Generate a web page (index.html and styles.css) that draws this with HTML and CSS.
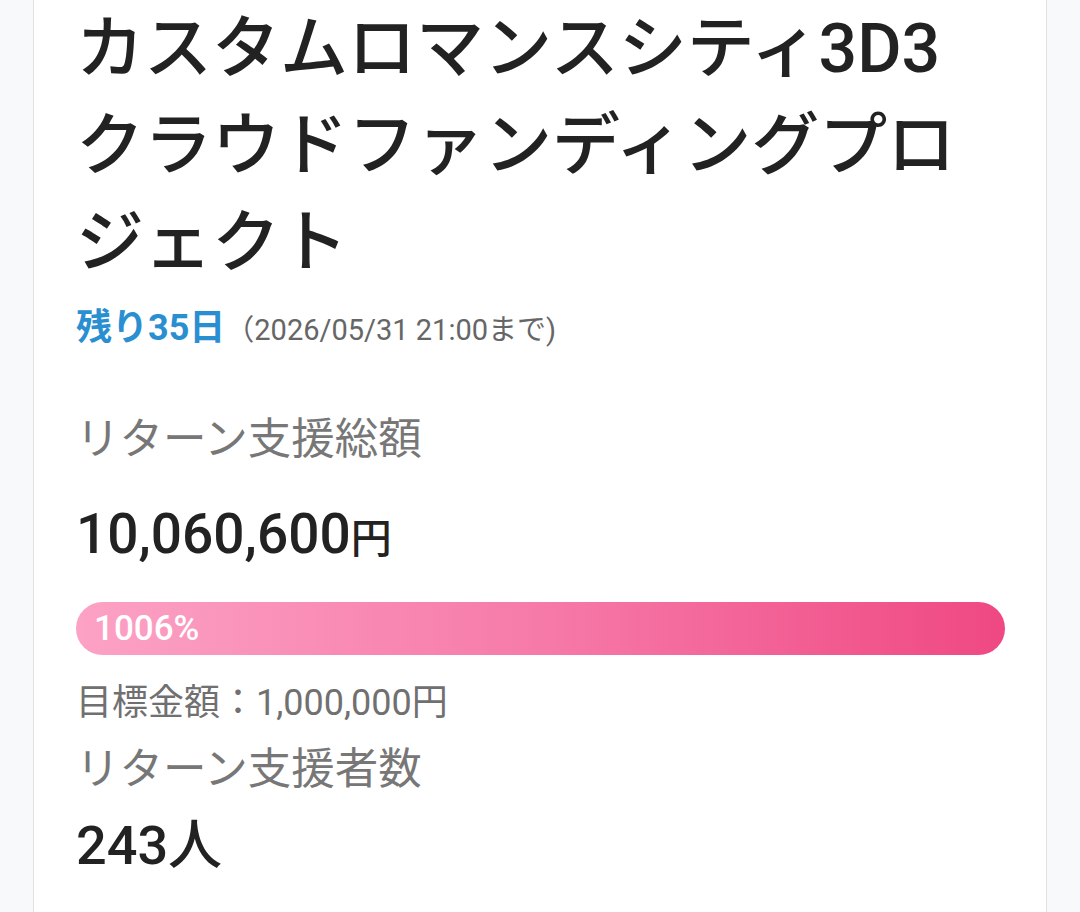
FILE: index.html
```html
<!DOCTYPE html>
<html lang="ja">
<head>
<meta charset="utf-8">
<link rel="stylesheet" href="styles.css">
</head>
<body>
<div class="page">
  <div class="card">
    <h1 class="title">カスタムロマンスシティ3D3クラウドファンディングプロジェクト</h1>
    <div class="deadline"><span class="remain">残り35日</span><span class="date">（2026/05/31 21:00まで)</span></div>
    <div class="label label-total">リターン支援総額</div>
    <div class="amount">10,060,600<span class="yen">円</span></div>
    <div class="bar"><span class="bar-text">1006%</span></div>
    <div class="goal">目標金額：1,000,000円</div>
    <div class="label label-backers">リターン支援者数</div>
    <div class="backers">243人</div>
  </div>
</div>
</body>
</html>
```

FILE: styles.css
```css
html, body {
  margin: 0;
  padding: 0;
  background: #f8f9fb;
  font-family: Roboto, "Noto Sans CJK JP", sans-serif;
}
.page {
  padding: 0 33px;
  height: 912px;
  overflow: hidden;
}
.card {
  background: #ffffff;
  border-left: 1px solid #e2e2e2;
  border-right: 1px solid #e2e2e2;
  padding: 1px 41px 40px 42px;
  min-height: 912px;
  box-sizing: border-box;
}
.title {
  margin: 0;
  font-size: 68px;
  line-height: 97px;
  font-weight: 500;
  color: #222222;
}
.deadline {
  margin-top: 10px;
  display: flex;
  align-items: baseline;
  line-height: 52px;
}
.remain {
  font-size: 36px;
  font-weight: 700;
  color: #2a8fd0;
}
.date {
  font-size: 29px;
  color: #666666;
}
.label {
  font-size: 43.5px;
  line-height: 60px;
  color: #777777;
}
.label-total {
  margin-top: 54px;
}
.amount {
  margin-top: 29px;
  font-size: 55px;
  line-height: 70px;
  font-weight: 500;
  color: #222222;
}
.yen {
  font-size: 41px;
}
.bar {
  margin-top: 28px;
  height: 53px;
  border-radius: 27px;
  background: linear-gradient(to right, #fca2c5 0%, #f67aa8 50%, #ef4882 100%);
  display: flex;
  align-items: center;
  padding-left: 18px;
}
.bar-text {
  color: #ffffff;
  font-size: 35px;
  font-weight: 500;
}
.goal {
  margin-top: 24px;
  font-size: 36px;
  line-height: 48px;
  color: #707070;
}
.label-backers {
  margin-top: 13px;
}
.backers {
  margin-top: 9px;
  font-size: 54px;
  line-height: 74px;
  font-weight: 500;
  color: #222222;
}
```
